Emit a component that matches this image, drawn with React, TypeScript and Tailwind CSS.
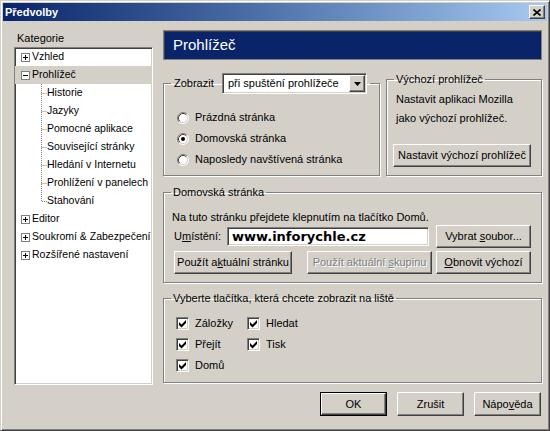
import React from 'react';

// classic 3D borders
const raised =
  'border border-t-white border-l-white border-r-[#404040] border-b-[#404040] shadow-[inset_-1px_-1px_0_#808080]';
const sunken =
  'border border-t-[#808080] border-l-[#808080] border-r-white border-b-white shadow-[inset_1px_1px_0_#404040,inset_-1px_-1px_0_#d4d0c8]';
const etched = 'border border-[#808080] shadow-[inset_1px_1px_0_#fff,1px_1px_0_#fff] m-0 p-0 min-w-0';

interface BtnProps {
  children: React.ReactNode;
  className: string;
  isDefault?: boolean;
  disabled?: boolean;
}

const Btn: React.FC<BtnProps> = ({ children, className, isDefault, disabled }) => (
  <button className={`${className} shrink-0 bg-[#d4d0c8] p-0 ${isDefault ? 'border border-black' : ''}`}>
    <span
      className={`flex h-full w-full items-center justify-center whitespace-nowrap ${raised} ${
        disabled ? 'text-[#808080] [text-shadow:1px_1px_0_#fff]' : 'text-black'
      }`}
    >
      <span>{children}</span>
    </span>
  </button>
);

const Expander: React.FC<{ open?: boolean }> = ({ open }) => (
  <span className="flex h-[9px] w-[9px] shrink-0 items-center justify-center border border-[#808080] bg-white">
    <svg width="7" height="7" viewBox="0 0 7 7">
      <path d="M1 3.5h5" stroke="#000" />
      {!open && <path d="M3.5 1v5" stroke="#000" />}
    </svg>
  </span>
);

const Radio: React.FC<{ checked?: boolean; label: string }> = ({ checked, label }) => (
  <div className="flex h-[21px] items-center gap-[6px]">
    <svg width="12" height="12" viewBox="0 0 12 12" className="shrink-0">
      <circle cx="6" cy="6" r="5" fill="#fff" />
      <path d="M2.11 9.89A5.5 5.5 0 0 1 9.89 2.11" stroke="#808080" fill="none" />
      <path d="M9.89 2.11A5.5 5.5 0 0 1 2.11 9.89" stroke="#fff" fill="none" />
      <path d="M2.82 9.18A4.5 4.5 0 0 1 9.18 2.82" stroke="#404040" fill="none" />
      <path d="M9.18 2.82A4.5 4.5 0 0 1 2.82 9.18" stroke="#d4d0c8" fill="none" />
      {checked && <circle cx="6" cy="6" r="2" fill="#000" />}
    </svg>
    <span>{label}</span>
  </div>
);

const Check: React.FC<{ label: string }> = ({ label }) => (
  <div className="flex h-[21px] items-center gap-[6px]">
    <span className={`flex h-[13px] w-[13px] shrink-0 items-center justify-center bg-white ${sunken}`}>
      <svg width="9" height="9" viewBox="0 0 9 9">
        <polygon points="1,3 3.5,5.5 8,1 8,4 3.5,8.5 1,6" fill="#000" />
      </svg>
    </span>
    <span>{label}</span>
  </div>
);

const children = [
  'Historie',
  'Jazyky',
  'Pomocné aplikace',
  'Související stránky',
  'Hledání v Internetu',
  'Prohlížení v panelech',
  'Stahování',
];

export default function App() {
  return (
    <div className="flex h-[431px] w-[550px] flex-col border border-t-[#d4d0c8] border-l-[#d4d0c8] border-r-[#404040] border-b-[#404040] bg-[#d4d0c8] p-[2px] font-['Liberation_Sans',Arial,sans-serif] text-[11px] text-black shadow-[inset_1px_1px_0_#fff,inset_-1px_-1px_0_#808080]">
      {/* Title bar */}
      <div className="flex h-[18px] shrink-0 items-center justify-between bg-linear-to-r from-[#0a246a] to-[#a6caf0] pl-[2px] pr-[2px]">
        <span className="font-bold text-white">Předvolby</span>
        <span className={`flex h-[14px] w-[16px] items-center justify-center bg-[#d4d0c8] ${raised}`}>
          <svg width="8" height="7" viewBox="0 0 8 7">
            <path d="M0.5 0.5L7.5 6.5M7.5 0.5L0.5 6.5" stroke="#000" strokeWidth="1.6" />
          </svg>
        </span>
      </div>

      <div className="flex h-[364px] shrink-0 gap-[10px] pl-[11px] pr-[5px]">
        {/* Categories */}
        <div className="flex w-[139px] shrink-0 flex-col">
          <div className="mt-[10px] pl-[3px] leading-[14px]">Kategorie</div>
          <div className={`mt-[2px] h-[338px] overflow-hidden whitespace-nowrap bg-white text-[10.5px] ${sunken}`}>
            <div className="flex h-[18px] items-center pl-[6px]">
              <Expander />
              <span className="ml-[2px]">Vzhled</span>
            </div>
            <div className="flex h-[18px] items-center bg-[#d4d0c8] pl-[6px]">
              <Expander open />
              <span className="ml-[2px]">Prohlížeč</span>
            </div>
            {children.map((c, i) => (
              <div key={c} className="flex h-[18px] items-center pl-[26px]">
                <svg width="6" height="18" viewBox="0 0 6 18" className="shrink-0">
                  <path
                    d={i === children.length - 1 ? 'M0.5 0V9.5H6' : 'M0.5 0V18M0.5 9.5H6'}
                    stroke="#808080"
                    strokeDasharray="1 1"
                    fill="none"
                  />
                </svg>
                <span>{c}</span>
              </div>
            ))}
            {['Editor', 'Soukromí & Zabezpečení', 'Rozšířené nastavení'].map((c) => (
              <div key={c} className="flex h-[18px] items-center pl-[6px]">
                <Expander />
                <span className="ml-[2px]">{c}</span>
              </div>
            ))}
          </div>
        </div>

        {/* Panel */}
        <div className="flex w-[379px] shrink-0 flex-col">
          <div className="mt-[9px] flex h-[30px] items-center border border-[#808080] bg-[#0a246a] pl-[9px] text-[15px] text-white shadow-[inset_1px_1px_0_#404040]">
            Prohlížeč
          </div>

          <div className="mt-[13px] flex h-[103px] gap-[6px]">
            <fieldset className={`w-[217px] shrink-0 ${etched}`}>
              <legend className="ml-[7px] p-0">
                <div className="flex h-[21px] items-center whitespace-nowrap px-[3px]">
                  <span className="w-[48px]">Zobrazit</span>
                  <div className={`flex h-[21px] w-[145px] items-center bg-white ${sunken}`}>
                    <span className="flex-1 pl-[5px]">při spuštění prohlížeče</span>
                    <span className={`mr-[1px] flex h-[17px] w-[16px] items-center justify-center bg-[#d4d0c8] ${raised}`}>
                      <svg width="7" height="4" viewBox="0 0 7 4">
                        <path d="M0 0h7L3.5 4z" fill="#000" />
                      </svg>
                    </span>
                  </div>
                </div>
              </legend>
              <div className="flex flex-col whitespace-nowrap pl-[13px] pt-[13px]">
                <Radio label="Prázdná stránka" />
                <Radio label="Domovská stránka" checked />
                <Radio label="Naposledy navštívená stránka" />
              </div>
            </fieldset>

            <fieldset className={`flex-1 ${etched}`}>
              <legend className="ml-[7px] px-[2px] leading-[13px]">Výchozí prohlížeč</legend>
              <div className="pl-[9px] pt-[4px]">
                <div className="leading-[19px]">Nastavit aplikaci Mozilla</div>
                <div className="leading-[19px]">jako výchozí prohlížeč.</div>
                <div className="-ml-[3px] mt-[16px]">
                  <Btn className="h-[23px] w-[138px]">Nastavit výchozí prohlížeč</Btn>
                </div>
              </div>
            </fieldset>
          </div>

          <fieldset className={`mt-[10px] ${etched}`}>
            <legend className="ml-[7px] px-[2px] leading-[13px]">Domovská stránka</legend>
            <div className="pb-[8px] pl-[8px] pr-[10px]">
              <div className="mt-[11px] whitespace-nowrap leading-[15px]">
                Na tuto stránku přejdete klepnutím na tlačítko Domů.
              </div>
              <div className="flex h-[23px] items-center pl-[2px]">
                <span className="w-[53px] shrink-0">
                  U<u>m</u>ístění:
                </span>
                <input
                  readOnly
                  value="www.inforychle.cz"
                  className={`h-[19px] w-[202px] shrink-0 bg-white px-[4px] font-['DejaVu_Sans',sans-serif] text-[13px] font-bold text-black outline-none ${sunken}`}
                />
                <div className="ml-[7px]">
                  <Btn className="h-[23px] w-[95px]">
                    Vybrat <u>s</u>oubor...
                  </Btn>
                </div>
              </div>
              <div className="mt-[3px] flex pl-[2px]">
                <Btn className="h-[23px] w-[118px]">
                  Použít a<u>k</u>tuální stránku
                </Btn>
                <div className="ml-[15px]">
                  <Btn className="h-[23px] w-[125px]" disabled>
                    Použít aktuální <u>s</u>kupinu
                  </Btn>
                </div>
                <div className="ml-[4px]">
                  <Btn className="h-[23px] w-[95px]">
                    <u>O</u>bnovit výchozí
                  </Btn>
                </div>
              </div>
            </div>
          </fieldset>

          <fieldset className={`mt-[9px] ${etched}`}>
            <legend className="ml-[7px] px-[2px] leading-[13px]">Vyberte tlačítka, která chcete zobrazit na liště</legend>
            <div className="grid grid-cols-[71px_71px] pb-[6px] pl-[12px] pt-[8px]">
              <Check label="Záložky" />
              <Check label="Hledat" />
              <Check label="Přejít" />
              <Check label="Tisk" />
              <Check label="Domů" />
            </div>
          </fieldset>
        </div>
      </div>

      {/* Dialog buttons */}
      <div className="mt-[7px] flex justify-end gap-[10px] pr-[6px]">
        <Btn className="h-[24px] w-[67px]" isDefault>
          OK
        </Btn>
        <Btn className="h-[24px] w-[67px]">Zrušit</Btn>
        <Btn className="h-[24px] w-[67px]">
          Nápo<u>v</u>ěda
        </Btn>
      </div>
    </div>
  );
}
